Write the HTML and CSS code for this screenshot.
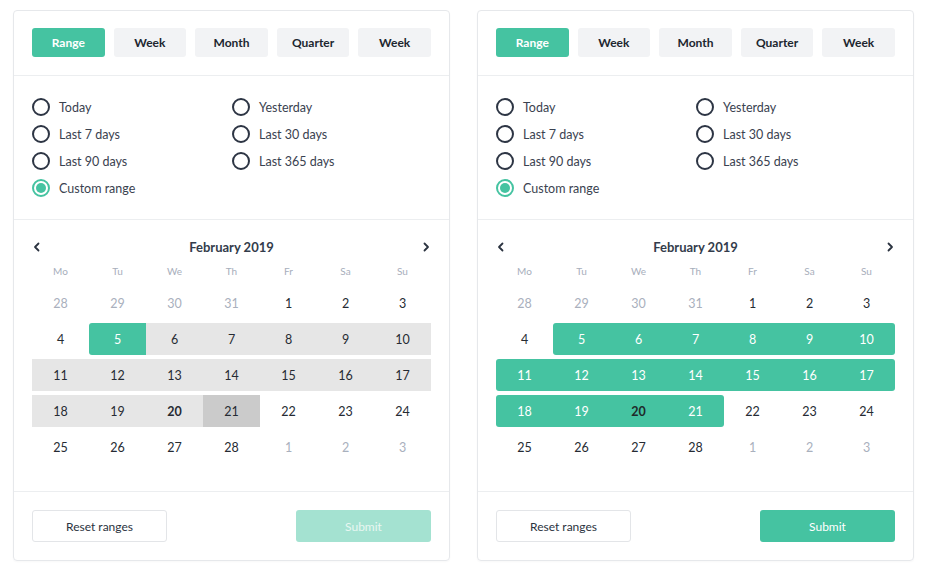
FILE: index.html
```html
<!DOCTYPE html>
<html lang="en">
<head>
  <meta charset="UTF-8">
  <meta name="viewport" content="width=device-width, initial-scale=1.0">
  <title>Date range picker</title>
  <link rel="stylesheet" href="styles.css">
</head>
<body>

  <div class="pickers">

    <!-- picking in progress: start chosen, hovering the end -->
    <div class="card">
      <div class="tabs">
        <button class="tab active">Range</button>
        <button class="tab">Week</button>
        <button class="tab">Month</button>
        <button class="tab">Quarter</button>
        <button class="tab">Week</button>
      </div>

      <div class="presets">
        <label class="radio"><span class="dot"></span>Today</label>
        <label class="radio"><span class="dot"></span>Yesterday</label>
        <label class="radio"><span class="dot"></span>Last 7 days</label>
        <label class="radio"><span class="dot"></span>Last 30 days</label>
        <label class="radio"><span class="dot"></span>Last 90 days</label>
        <label class="radio"><span class="dot"></span>Last 365 days</label>
        <label class="radio checked"><span class="dot"></span>Custom range</label>
      </div>

      <div class="calendar">
        <div class="cal-head">
          <span class="arrow"><svg width="10" height="10" viewBox="0 0 10 10"><path d="M6.5 1.5 3 5l3.5 3.5" fill="none" stroke="#2b3340" stroke-width="1.8" stroke-linecap="round" stroke-linejoin="round"/></svg></span>
          <span class="month">February 2019</span>
          <span class="arrow"><svg width="10" height="10" viewBox="0 0 10 10"><path d="M3.5 1.5 7 5 3.5 8.5" fill="none" stroke="#2b3340" stroke-width="1.8" stroke-linecap="round" stroke-linejoin="round"/></svg></span>
        </div>
        <div class="weekdays">
          <span>Mo</span><span>Tu</span><span>We</span><span>Th</span><span>Fr</span><span>Sa</span><span>Su</span>
        </div>
        <div class="days">
          <span class="muted">28</span><span class="muted">29</span><span class="muted">30</span><span class="muted">31</span><span>1</span><span>2</span><span>3</span>
          <span>4</span><span class="start">5</span><span class="hover">6</span><span class="hover">7</span><span class="hover">8</span><span class="hover">9</span><span class="hover">10</span>
          <span class="hover">11</span><span class="hover">12</span><span class="hover">13</span><span class="hover">14</span><span class="hover">15</span><span class="hover">16</span><span class="hover">17</span>
          <span class="hover">18</span><span class="hover">19</span><span class="hover today">20</span><span class="hover-end">21</span><span>22</span><span>23</span><span>24</span>
          <span>25</span><span>26</span><span>27</span><span>28</span><span class="muted">1</span><span class="muted">2</span><span class="muted">3</span>
        </div>
      </div>

      <div class="footer">
        <button class="btn-reset">Reset ranges</button>
        <button class="btn-submit" disabled>Submit</button>
      </div>
    </div>

    <!-- range selected -->
    <div class="card">
      <div class="tabs">
        <button class="tab active">Range</button>
        <button class="tab">Week</button>
        <button class="tab">Month</button>
        <button class="tab">Quarter</button>
        <button class="tab">Week</button>
      </div>

      <div class="presets">
        <label class="radio"><span class="dot"></span>Today</label>
        <label class="radio"><span class="dot"></span>Yesterday</label>
        <label class="radio"><span class="dot"></span>Last 7 days</label>
        <label class="radio"><span class="dot"></span>Last 30 days</label>
        <label class="radio"><span class="dot"></span>Last 90 days</label>
        <label class="radio"><span class="dot"></span>Last 365 days</label>
        <label class="radio checked"><span class="dot"></span>Custom range</label>
      </div>

      <div class="calendar">
        <div class="cal-head">
          <span class="arrow"><svg width="10" height="10" viewBox="0 0 10 10"><path d="M6.5 1.5 3 5l3.5 3.5" fill="none" stroke="#2b3340" stroke-width="1.8" stroke-linecap="round" stroke-linejoin="round"/></svg></span>
          <span class="month">February 2019</span>
          <span class="arrow"><svg width="10" height="10" viewBox="0 0 10 10"><path d="M3.5 1.5 7 5 3.5 8.5" fill="none" stroke="#2b3340" stroke-width="1.8" stroke-linecap="round" stroke-linejoin="round"/></svg></span>
        </div>
        <div class="weekdays">
          <span>Mo</span><span>Tu</span><span>We</span><span>Th</span><span>Fr</span><span>Sa</span><span>Su</span>
        </div>
        <div class="days">
          <span class="muted">28</span><span class="muted">29</span><span class="muted">30</span><span class="muted">31</span><span>1</span><span>2</span><span>3</span>
          <span>4</span><span class="sel first">5</span><span class="sel">6</span><span class="sel">7</span><span class="sel">8</span><span class="sel">9</span><span class="sel last">10</span>
          <span class="sel first">11</span><span class="sel">12</span><span class="sel">13</span><span class="sel">14</span><span class="sel">15</span><span class="sel">16</span><span class="sel last">17</span>
          <span class="sel first">18</span><span class="sel">19</span><span class="sel today">20</span><span class="sel last">21</span><span>22</span><span>23</span><span>24</span>
          <span>25</span><span>26</span><span>27</span><span>28</span><span class="muted">1</span><span class="muted">2</span><span class="muted">3</span>
        </div>
      </div>

      <div class="footer">
        <button class="btn-reset">Reset ranges</button>
        <button class="btn-submit">Submit</button>
      </div>
    </div>

  </div>

</body>
</html>
```

FILE: styles.css
```css
body {
  font-family: Lato, "Open Sans", sans-serif;
  background-color: #fff;
  color: #2b3340;
  margin: 0;
  padding: 10px 13px;
}

.pickers {
  display: flex;
  gap: 27px;
}

.card {
  width: 437px;
  box-sizing: border-box;
  border: 1px solid #e6e8eb;
  border-radius: 4px;
  box-shadow: 0 1px 2px rgba(0, 0, 0, 0.03);
}

button {
  font-family: inherit;
  border: none;
  cursor: pointer;
}

/* tabs */
.tabs {
  display: flex;
  gap: 9px;
  padding: 17px 18px 18px;
  border-bottom: 1px solid #eceef0;
}

.tab {
  flex: 1;
  height: 29px;
  border-radius: 3px;
  background-color: #f2f3f5;
  color: #20262f;
  font-size: 12px;
  font-weight: 700;
}

.tab.active {
  background-color: #45c3a1;
  color: #fff;
}

/* preset radios */
.presets {
  display: grid;
  grid-template-columns: 200px 1fr;
  row-gap: 9px;
  padding: 22px 18px;
  border-bottom: 1px solid #eceef0;
}

.radio {
  display: flex;
  align-items: center;
  gap: 9px;
  height: 18px;
  font-size: 12.5px;
  color: #3a4250;
}

.dot {
  width: 18px;
  height: 18px;
  box-sizing: border-box;
  border: 2px solid #2d3544;
  border-radius: 50%;
  display: flex;
  align-items: center;
  justify-content: center;
}

.radio.checked .dot {
  border-color: #45c3a1;
}

.radio.checked .dot::after {
  content: "";
  width: 10px;
  height: 10px;
  border-radius: 50%;
  background-color: #45c3a1;
}

/* calendar */
.calendar {
  padding: 17px 18px 28px;
  border-bottom: 1px solid #eceef0;
}

.cal-head {
  display: flex;
  align-items: center;
  justify-content: space-between;
  height: 20px;
}

.arrow {
  display: flex;
  width: 10px;
  height: 10px;
}

.month {
  font-size: 13px;
  font-weight: 700;
  color: #333c4b;
}

.weekdays {
  display: grid;
  grid-template-columns: repeat(7, 1fr);
  height: 18px;
  margin-top: 5px;
  align-items: center;
  text-align: center;
  font-size: 10px;
  color: #a7aebb;
}

.days {
  display: grid;
  grid-template-columns: repeat(7, 1fr);
  grid-auto-rows: 32px;
  row-gap: 4px;
  margin-top: 7px;
  font-size: 12.5px;
  color: #262b33;
}

.days span {
  display: flex;
  align-items: center;
  justify-content: center;
}

.days .muted {
  color: #a9b0bd;
}

.days .today {
  font-weight: 700;
}

.days .hover {
  background-color: #e6e6e6;
}

.days .hover-end {
  background-color: #cbcbcb;
}

.days .start {
  background-color: #45c3a1;
  color: #fff;
  border-radius: 3px 0 0 3px;
}

.days .sel {
  background-color: #45c3a1;
  color: #fff;
}

.days .sel.today {
  color: #1f2a2a;
}

.days .first {
  border-radius: 3px 0 0 3px;
}

.days .last {
  border-radius: 0 3px 3px 0;
}

/* footer */
.footer {
  display: flex;
  justify-content: space-between;
  padding: 18px;
}

.btn-reset,
.btn-submit {
  width: 135px;
  height: 32px;
  border-radius: 3px;
  font-size: 12px;
}

.btn-reset {
  background-color: #fff;
  border: 1px solid #e3e5e8;
  color: #2b3340;
}

.btn-submit {
  background-color: #45c3a1;
  color: #fff;
}

.btn-submit:disabled {
  background-color: #a4e2d1;
  color: #e8f7f2;
  cursor: default;
}
```
